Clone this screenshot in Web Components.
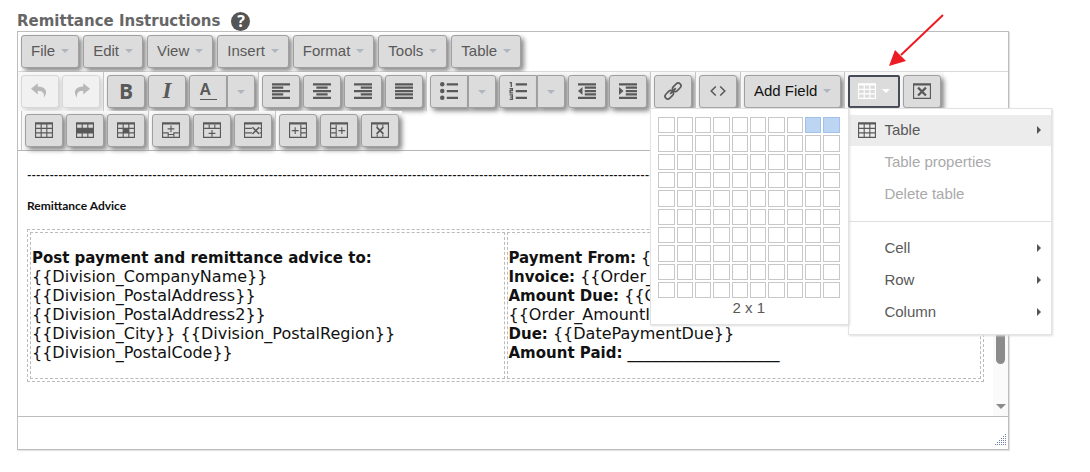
<!DOCTYPE html>
<html lang="en">
<head>
<meta charset="utf-8">
<title>Remittance Instructions</title>
<style>
    body {
        margin: 0;
        padding: 11px 81px 20px 17px;
        background: #fff;
        font-family: "Liberation Sans", Arial, sans-serif;
        font-size: 15px;
        color: #595959;
    }
</style>
</head>
<body>
<remit-field label="Remittance Instructions">
    <remit-editor></remit-editor>
</remit-field>
<remit-arrow></remit-arrow>

<script>
// icons are drawn on a 16x16 grid
const FRAME = 'M0 1h16v14H0z';
const cell = (x, y) => `M${x} ${y}h4v3h-4z`;
const cells = (xs, ys) => ys.map(y => xs.map(x => cell(x, y)).join('')).join('');
const path = d => `<path fill-rule="evenodd" d="${d}"/>`;
const line = (d, w = 1) => `<path fill="none" stroke="currentColor" stroke-width="${w}" d="${d}"/>`;
const COLS = [1, 6, 11];
const ROWS = [3, 7, 11];
const THIN = 'M0 1h16v14H0zM1 3h14v11H1z';

const ICONS = {
    undo: path('M6 1L0 6l6 5V8c3.500-.3 6 .7 5.500 6C16 7.500 12 4 6 4z'),
    redo: path('M10 1l6 5-6 5V8c-3.500-.3-6 .7-5.500 6C0 7.500 4 4 10 4z'),
    alignleft: path('M0 1h16v2H0zM0 4h10v2H0zM0 7h16v2H0zM0 10h10v2H0zM0 13h16v2H0z'),
    aligncenter: path('M0 1h16v2H0zM3 4h10v2H3zM0 7h16v2H0zM3 10h10v2H3zM0 13h16v2H0z'),
    alignright: path('M0 1h16v2H0zM6 4h10v2H6zM0 7h16v2H0zM6 10h10v2H6zM0 13h16v2H0z'),
    alignjustify: path('M0 1h16v2H0zM0 4h16v2H0zM0 7h16v2H0zM0 10h16v2H0zM0 13h16v2H0z'),
    bullist: '<circle cx="2" cy="2" r="2"/><circle cx="2" cy="8" r="2"/><circle cx="2" cy="14" r="2"/>' +
        path('M6 1h10v2H6zM6 7h10v2H6zM6 13h10v2H6z'),
    numlist: path('M6 1h10v2H6zM6 7h10v2H6zM6 13h10v2H6z') +
        line('M.5 .5h1.500V4.500M.5 6h2.500v1.700H1v2H3.500M.5 11.500h2.500v4H.5M1 13.500H3', 1.200),
    outdent: path('M0 1h16v2H0zM6 4h10v2H6zM6 7h10v2H6zM6 10h10v2H6zM0 13h16v2H0zM4 4.500v7L0 8z'),
    indent: path('M0 1h16v2H0zM6 4h10v2H6zM6 7h10v2H6zM6 10h10v2H6zM0 13h16v2H0zM0 4.500v7L4 8z'),
    link: `<g transform="rotate(-45 8 8)" fill="none" stroke="currentColor" stroke-width="1.400">
        <rect x="-1" y="5.500" width="8.500" height="5" rx="2.500"/>
        <rect x="8.500" y="5.500" width="8.500" height="5" rx="2.500"/>
        <path d="M4.500 8h7" stroke-width="1.600"/></g>`,
    code: line('M6 4L2 8l4 4M10 4l4 4-4 4', 1.4),
    table: path(FRAME + cells(COLS, ROWS)),
    rowprops: path(FRAME + cells(COLS, [3, 11])),
    cellprops: path(FRAME + cells(COLS, [3, 11]) + cells([1, 11], [7])),
    rowbefore: path(THIN) + line('M1 10.500h4.500V14M15 10.500h-4.500V14M5.500 12h5M8 4v6M5 7h6'),
    rowafter: path(THIN) + line('M1 6.500h14M5.500 3v3.500M10.500 3v3.500M8 8v6M5 11h6'),
    rowdelete: path(THIN) + line('M1 6.500h6M1 10.500h6M14 6.500h1M14 10.500h1') + line('M7.500 5.500l6 6M13.500 5.500l-6 6', 1.4),
    colbefore: path(THIN) + line('M10.500 3v11M10.500 6.500H15M10.500 10.500H15M5.500 5.500v6M2.500 8.500h6', 1),
    colafter: path(THIN) + line('M5.500 3v11M1 6.500h4.500M1 10.500h4.500M10.500 5.500v6M7.500 8.500h6', 1),
    coldelete: path(THIN) + line('M5.500 3v2M5.500 12v2M10.500 3v2M10.500 12v2') + line('M5 5.500l6 6M11 5.500l-6 6', 1.6),
    tabledelete: path(THIN) + line('M4.500 5l7 7M11.500 5l-7 7', 2)
};

class RemitIcon extends HTMLElement {
    connectedCallback() {
        this.attachShadow({ mode: 'open' }).innerHTML = `
            <style>
                :host { display: block; width: 18px; height: 18px; }
                svg { display: block; width: 100%; height: 100%; overflow: visible; fill: currentColor; }
            </style>
            <svg viewBox="0 0 16 16" aria-hidden="true">${ICONS[this.getAttribute('name')]}</svg>
        `;
    }
}
customElements.define('remit-icon', RemitIcon);

// push button; kind "split" is the left half of a split button, "arrow" the right half
class RemitButton extends HTMLElement {
    connectedCallback() {
        const icon = this.getAttribute('icon');
        const caret = this.hasAttribute('caret') ? '<span class="caret"></span>' : '';
        const disabled = this.hasAttribute('disabled') ? 'disabled' : '';
        const label = this.getAttribute('label');
        this.attachShadow({ mode: 'open' }).innerHTML = `
            <style>
                :host { display: block; }
                button {
                    display: flex;
                    align-items: center;
                    justify-content: center;
                    box-sizing: border-box;
                    height: 33px;
                    min-width: 38px;
                    margin: 0;
                    padding: 0 9px 2px;
                    gap: 6px;
                    border: 1px solid #a0a0a0;
                    border-radius: 3px;
                    background: #dcdcdc;
                    box-shadow: 3px 3px 5px #888;
                    color: inherit;
                    font: inherit;
                    white-space: nowrap;
                }
                button:disabled {
                    border-color: #d8d8d8;
                    background: #f1f1f1;
                    box-shadow: 3px 3px 5px #d4d4d4;
                    color: #b8b8b8;
                }
                .caret {
                    border: 4px solid transparent;
                    border-top-color: #b0b6bd;
                    border-bottom: 0;
                }
                :host([kind=arrow]) button { min-width: 28px; padding: 0; border-radius: 0 3px 3px 0; }
                :host([kind=split]) button { border-radius: 3px 0 0 3px; }
                :host([active]) button {
                    border: 2px solid #464b57;
                    border-radius: 2px;
                    padding: 0 8px 2px;
                    color: #fff;
                    box-shadow: none;
                }
                :host([active]) .caret { border-top-color: #fff; }
            </style>
            <button type="button" ${disabled} ${label ? `aria-label="${label}"` : ''}>
                ${icon ? `<remit-icon name="${icon}"></remit-icon>` : '<slot></slot>'}
                ${caret}
            </button>
        `;
    }
}
customElements.define('remit-button', RemitButton);

class RemitGroup extends HTMLElement {
    connectedCallback() {
        this.attachShadow({ mode: 'open' }).innerHTML = `
            <style>
                :host {
                    display: flex;
                    gap: 3px;
                    padding: 3px;
                    border-left: 1px solid #c5c5c5;
                    background: #f8f8f8;
                }
                :host([first]) { border-left: 0; }
            </style>
            <slot></slot>
        `;
    }
}
customElements.define('remit-group', RemitGroup);

class RemitSizePicker extends HTMLElement {
    connectedCallback() {
        let grid = '';
        for (let row = 1; row <= 10; row++) {
            for (let col = 10; col >= 1; col--) {
                const on = row === 1 && col <= 2 ? 'class="on"' : '';
                grid += `<button type="button" ${on} aria-label="${col} x ${row}"></button>`;
            }
        }
        this.attachShadow({ mode: 'open' }).innerHTML = `
            <style>
                :host {
                    display: block;
                    padding: 8px 9px 6px 7px;
                    border: 1px solid #e2e2e2;
                    background: #fff;
                    box-shadow: 1px 1px 2px #ddd;
                    text-align: center;
                }
                .grid { display: grid; grid-template-columns: repeat(10, 1fr); gap: 2px; width: 181px; }
                button {
                    aspect-ratio: 1;
                    padding: 0;
                    border: 1px solid #c8c8c8;
                    border-radius: 0;
                    background: #fff;
                }
                .on { border-color: #9fc1ea; background: #bcd5f2; }
                output { display: block; line-height: 20px; }
            </style>
            <div class="grid">${grid}</div>
            <output>2 x 1</output>
        `;
    }
}
customElements.define('remit-size-picker', RemitSizePicker);

class RemitMenuItem extends HTMLElement {
    connectedCallback() {
        const icon = this.getAttribute('icon');
        this.attachShadow({ mode: 'open' }).innerHTML = `
            <style>
                :host { display: block; }
                button {
                    display: flex;
                    align-items: center;
                    width: 100%;
                    height: 31px;
                    padding: 0 10px 2px 9px;
                    gap: 8px;
                    border: 0;
                    background: none;
                    color: inherit;
                    font: inherit;
                }
                button:disabled { color: #aaa; }
                .icon { width: 18px; }
                .more {
                    margin-left: auto;
                    border: 4px solid transparent;
                    border-left-color: #555;
                    border-right: 0;
                }
                :host([active]) button { background: #ececec; }
            </style>
            <button type="button" ${this.hasAttribute('disabled') ? 'disabled' : ''}>
                <span class="icon">${icon ? `<remit-icon name="${icon}"></remit-icon>` : ''}</span>
                <slot></slot>
                ${this.hasAttribute('more') ? '<span class="more"></span>' : ''}
            </button>
        `;
    }
}
customElements.define('remit-menu-item', RemitMenuItem);

class RemitTableMenu extends HTMLElement {
    connectedCallback() {
        this.attachShadow({ mode: 'open' }).innerHTML = `
            <style>
                :host { display: block; position: relative; }
                .menu {
                    position: absolute;
                    z-index: 2;
                    top: 100%;
                    left: 0;
                    box-sizing: border-box;
                    width: 204px;
                    display: flex;
                    flex-direction: column;
                    gap: 1px;
                    padding: 6px 0;
                    border: 1px solid #e2e2e2;
                    background: #fff;
                    box-shadow: 1px 1px 2px #ddd;
                }
                hr { width: 100%; margin: 10px 0; border: 0; border-top: 1px solid #dedede; }
                remit-size-picker { position: absolute; top: -1px; right: 100%; }
            </style>
            <remit-button active caret icon="table" label="Table"></remit-button>
            <div class="menu">
                <remit-menu-item active more icon="table">Table</remit-menu-item>
                <remit-menu-item disabled>Table properties</remit-menu-item>
                <remit-menu-item disabled>Delete table</remit-menu-item>
                <hr>
                <remit-menu-item more>Cell</remit-menu-item>
                <remit-menu-item more>Row</remit-menu-item>
                <remit-menu-item more>Column</remit-menu-item>
                <remit-size-picker></remit-size-picker>
            </div>
        `;
    }
}
customElements.define('remit-table-menu', RemitTableMenu);

class RemitDocument extends HTMLElement {
    connectedCallback() {
        this.attachShadow({ mode: 'open' }).innerHTML = `
            <style>
                :host { display: flex; background: #fff; color: #111; }
                .page { flex: 1; min-width: 0; padding: 16px 9px 34px; }
                .small {
                    margin: 0 0 15px;
                    font: bold 12px/16px Lato, sans-serif;
                    white-space: nowrap;
                }
                table {
                    width: 100%;
                    table-layout: fixed;
                    border: 1px dashed #bbb;
                    border-spacing: 2px;
                    font: 16px/19px "DejaVu Sans", Verdana, sans-serif;
                }
                td { padding: 1px; border: 1px dashed #bbb; vertical-align: top; }
                td p { margin: 14px 0 15px; }
                b { font-size: 15px; line-height: 1; }
                .scroll {
                    display: flex;
                    flex-direction: column;
                    align-items: center;
                    width: 15px;
                    background: #fafafa;
                }
                .thumb { flex: 1; width: 9px; margin: 15px 0 40px; border-radius: 5px; background: #8b8b8b; }
                .down { margin-bottom: 7px; border: 5px solid transparent; border-top-color: #8b8b8b; border-bottom: 0; }
            </style>
            <div class="page" contenteditable="true" role="textbox" aria-label="Remittance Instructions" spellcheck="false">
                <p class="small">${'-'.repeat(145)}</p>
                <p class="small">Remittance Advice</p>
                <table>
                    <tr>
                        <td><p><b>Post payment and remittance advice to:</b><br>
                            {{Division_CompanyName}}<br>
                            {{Division_PostalAddress}}<br>
                            {{Division_PostalAddress2}}<br>
                            {{Division_City}} {{Division_PostalRegion}}<br>
                            {{Division_PostalCode}}</p></td>
                        <td><p><b>Payment From:</b> {{Name}}<br>
                            <b>Invoice:</b> {{Order_No}}<br>
                            <b>Amount Due:</b> {{Order}}<br>
                            {{Order_AmountInc}}<br>
                            <b>Due:</b> {{DatePaymentDue}}<br>
                            <b>Amount Paid:</b> ___________________</p></td>
                    </tr>
                </table>
            </div>
            <div class="scroll"><span class="thumb"></span><span class="down"></span></div>
        `;
    }
}
customElements.define('remit-document', RemitDocument);

class RemitEditor extends HTMLElement {
    getMenus() {
        return ['File', 'Edit', 'View', 'Insert', 'Format', 'Tools', 'Table']
            .map(name => `<remit-button caret>${name}</remit-button>`).join('');
    }

    getButtons(names) {
        return names.map(name => `<remit-button icon="${name}" label="${name}"></remit-button>`).join('');
    }

    getGrip() {
        let dots = '';
        for (let row = 0; row < 6; row++) {
            for (let col = 5 - row; col < 6; col++) {
                dots += `<rect x="${col * 2}" y="${row * 2}" width="1" height="1"/>`;
            }
        }
        return `<svg class="grip" viewBox="0 0 11 11" aria-hidden="true">${dots}</svg>`;
    }

    connectedCallback() {
        this.attachShadow({ mode: 'open' }).innerHTML = `
            <style>
                :host {
                    display: block;
                    border: 1px solid #bdbdbd;
                    background: #fff;
                    box-shadow: 1px 1px 1px #e4e4e4;
                }
                .menubar { display: flex; gap: 4px; padding: 3px; border-bottom: 1px solid #dadada; }
                .toolbars { border-bottom: 1px solid #b5b5b5; }
                .toolbar { display: flex; }
                .second { padding-left: 3px; }
                .split { display: flex; }
                .bold { font: bold 21px/28px "Open Sans", sans-serif; }
                .italic { font: italic bold 23px/28px "Liberation Serif", serif; }
                .color { display: block; width: 17px; border-bottom: 1px solid; font-weight: bold; font-size: 16px; text-align: left; }
                .field { color: #111; }
                .status { display: flex; justify-content: flex-end; padding: 17px 2px 4px; border-top: 1px solid #bdbdbd; }
                .grip { width: 11px; height: 11px; fill: #6d7da5; }
            </style>
            <nav class="menubar">${this.getMenus()}</nav>
            <div class="toolbars">
                <div class="toolbar">
                    <remit-group first>
                        <remit-button disabled icon="undo" label="Undo"></remit-button>
                        <remit-button disabled icon="redo" label="Redo"></remit-button>
                    </remit-group>
                    <remit-group>
                        <remit-button><span class="bold">B</span></remit-button>
                        <remit-button><span class="italic">I</span></remit-button>
                        <div class="split">
                            <remit-button kind="split"><span class="color">A</span></remit-button>
                            <remit-button kind="arrow" caret label="Text color"></remit-button>
                        </div>
                    </remit-group>
                    <remit-group>${this.getButtons(['alignleft', 'aligncenter', 'alignright', 'alignjustify'])}</remit-group>
                    <remit-group>
                        <div class="split">
                            <remit-button kind="split" icon="bullist" label="Bullet list"></remit-button>
                            <remit-button kind="arrow" caret label="Bullet styles"></remit-button>
                        </div>
                        <div class="split">
                            <remit-button kind="split" icon="numlist" label="Numbered list"></remit-button>
                            <remit-button kind="arrow" caret label="Number styles"></remit-button>
                        </div>
                        ${this.getButtons(['outdent', 'indent'])}
                    </remit-group>
                    <remit-group>${this.getButtons(['link'])}</remit-group>
                    <remit-group>${this.getButtons(['code'])}</remit-group>
                    <remit-group><remit-button caret class="field">Add Field</remit-button></remit-group>
                    <remit-group>
                        <remit-table-menu></remit-table-menu>
                        <remit-button icon="tabledelete" label="Delete table"></remit-button>
                    </remit-group>
                </div>
                <div class="toolbar second">
                    <remit-group>${this.getButtons(['table', 'rowprops', 'cellprops'])}</remit-group>
                    <remit-group>${this.getButtons(['rowbefore', 'rowafter', 'rowdelete'])}</remit-group>
                    <remit-group>${this.getButtons(['colbefore', 'colafter', 'coldelete'])}</remit-group>
                </div>
            </div>
            <remit-document></remit-document>
            <div class="status">${this.getGrip()}</div>
        `;
    }
}
customElements.define('remit-editor', RemitEditor);

class RemitField extends HTMLElement {
    connectedCallback() {
        this.attachShadow({ mode: 'open' }).innerHTML = `
            <style>
                :host { display: block; }
                header { display: flex; align-items: center; gap: 11px; height: 20px; color: #666; }
                h1 { margin: 0; font: bold 15px/20px "DejaVu Sans", Verdana, sans-serif; }
                button {
                    width: 19px;
                    height: 19px;
                    padding: 0;
                    border: 0;
                    border-radius: 50%;
                    background: #555;
                    color: #fff;
                    font: bold 16px/19px "Open Sans", sans-serif;
                }
            </style>
            <header>
                <h1>${this.getAttribute('label')}</h1>
                <button type="button">?</button>
            </header>
            <slot></slot>
        `;
    }
}
customElements.define('remit-field', RemitField);

// red pointer laid over the editor
class RemitArrow extends HTMLElement {
    connectedCallback() {
        this.attachShadow({ mode: 'open' }).innerHTML = `
            <style>
                :host { position: absolute; z-index: 3; top: 14px; left: 889px; pointer-events: none; }
                svg { display: block; width: 55px; height: 52px; }
            </style>
            <svg viewBox="0 0 55 52" aria-hidden="true">
                <path d="M54 1L12 41" stroke="#ed1c24" stroke-width="2"/>
                <path d="M0 52L6 36l11 11z" fill="#ed1c24"/>
            </svg>
        `;
    }
}
customElements.define('remit-arrow', RemitArrow);
</script>
</body>
</html>
